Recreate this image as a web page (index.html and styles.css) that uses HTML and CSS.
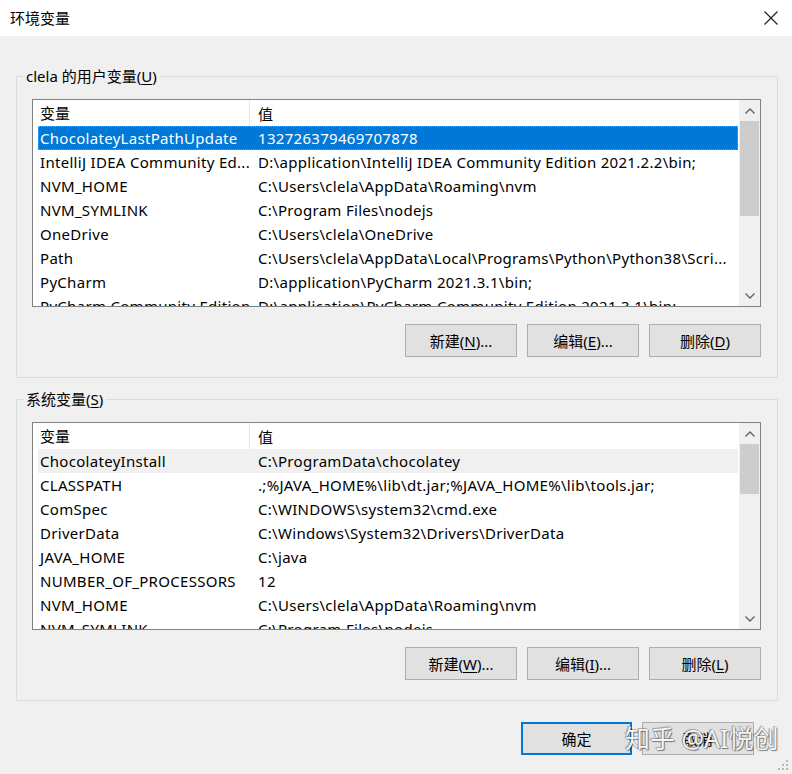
FILE: index.html
```html
<!DOCTYPE html>
<html>
<head>
<meta charset="utf-8">
<title>环境变量</title>
<link rel="stylesheet" href="styles.css">
</head>
<body>

<div class="titlebar">
  <span class="title">环境变量</span>
  <svg class="close" width="16" height="16" viewBox="0 0 16 16">
    <path d="M1.5 1.5 L14.5 14.5 M14.5 1.5 L1.5 14.5" stroke="#1a1a1a" stroke-width="1.1" fill="none"/>
  </svg>
</div>

<div class="content">

  <div class="group">
    <span class="group-title">clela 的用户变量(<u>U</u>)</span>
    <div class="list">
      <div class="list-main">
        <div class="list-head">
          <div class="hname">变量</div>
          <div class="hval">值</div>
        </div>
        <div class="row selected"><div class="name">ChocolateyLastPathUpdate</div><div class="val">132726379469707878</div></div>
        <div class="row"><div class="name">IntelliJ IDEA Community Ed...</div><div class="val">D:\application\IntelliJ IDEA Community Edition 2021.2.2\bin;</div></div>
        <div class="row"><div class="name">NVM_HOME</div><div class="val">C:\Users\clela\AppData\Roaming\nvm</div></div>
        <div class="row"><div class="name">NVM_SYMLINK</div><div class="val">C:\Program Files\nodejs</div></div>
        <div class="row"><div class="name">OneDrive</div><div class="val">C:\Users\clela\OneDrive</div></div>
        <div class="row"><div class="name">Path</div><div class="val">C:\Users\clela\AppData\Local\Programs\Python\Python38\Scri...</div></div>
        <div class="row"><div class="name">PyCharm</div><div class="val">D:\application\PyCharm 2021.3.1\bin;</div></div>
        <div class="row"><div class="name">PyCharm Community Edition</div><div class="val">D:\application\PyCharm Community Edition 2021.3.1\bin;</div></div>
      </div>
      <div class="scrollbar">
        <div class="arrow">
          <svg width="10" height="6" viewBox="0 0 10 6"><path d="M0.5 5.5 L5 1 L9.5 5.5" stroke="#606060" stroke-width="1.3" fill="none"/></svg>
        </div>
        <div class="track">
          <div class="thumb thumb-user"></div>
        </div>
        <div class="arrow">
          <svg width="10" height="6" viewBox="0 0 10 6"><path d="M0.5 0.5 L5 5 L9.5 0.5" stroke="#606060" stroke-width="1.3" fill="none"/></svg>
        </div>
      </div>
    </div>
    <div class="buttons">
      <button class="btn">新建(<u>N</u>)...</button>
      <button class="btn">编辑(<u>E</u>)...</button>
      <button class="btn">删除(<u>D</u>)</button>
    </div>
  </div>

  <div class="group group-sys">
    <span class="group-title">系统变量(<u>S</u>)</span>
    <div class="list">
      <div class="list-main">
        <div class="list-head">
          <div class="hname">变量</div>
          <div class="hval">值</div>
        </div>
        <div class="row hover"><div class="name">ChocolateyInstall</div><div class="val">C:\ProgramData\chocolatey</div></div>
        <div class="row"><div class="name">CLASSPATH</div><div class="val">.;%JAVA_HOME%\lib\dt.jar;%JAVA_HOME%\lib\tools.jar;</div></div>
        <div class="row"><div class="name">ComSpec</div><div class="val">C:\WINDOWS\system32\cmd.exe</div></div>
        <div class="row"><div class="name">DriverData</div><div class="val">C:\Windows\System32\Drivers\DriverData</div></div>
        <div class="row"><div class="name">JAVA_HOME</div><div class="val">C:\java</div></div>
        <div class="row"><div class="name">NUMBER_OF_PROCESSORS</div><div class="val">12</div></div>
        <div class="row"><div class="name">NVM_HOME</div><div class="val">C:\Users\clela\AppData\Roaming\nvm</div></div>
        <div class="row"><div class="name">NVM_SYMLINK</div><div class="val">C:\Program Files\nodejs</div></div>
      </div>
      <div class="scrollbar">
        <div class="arrow">
          <svg width="10" height="6" viewBox="0 0 10 6"><path d="M0.5 5.5 L5 1 L9.5 5.5" stroke="#606060" stroke-width="1.3" fill="none"/></svg>
        </div>
        <div class="track">
          <div class="thumb thumb-sys"></div>
        </div>
        <div class="arrow">
          <svg width="10" height="6" viewBox="0 0 10 6"><path d="M0.5 0.5 L5 5 L9.5 0.5" stroke="#606060" stroke-width="1.3" fill="none"/></svg>
        </div>
      </div>
    </div>
    <div class="buttons">
      <button class="btn">新建(<u>W</u>)...</button>
      <button class="btn">编辑(<u>I</u>)...</button>
      <button class="btn">删除(<u>L</u>)</button>
    </div>
  </div>

  <div class="footer">
    <button class="btn btn-default">确定</button>
    <button class="btn">取消</button>
  </div>

</div>

<div class="watermark">知乎 @AI悦创</div>

<svg class="grip" width="12" height="12" viewBox="0 0 12 12">
  <rect x="9" y="1" width="2" height="2" fill="#b8b8b8"/>
  <rect x="5" y="5" width="2" height="2" fill="#b8b8b8"/>
  <rect x="9" y="5" width="2" height="2" fill="#b8b8b8"/>
  <rect x="1" y="9" width="2" height="2" fill="#b8b8b8"/>
  <rect x="5" y="9" width="2" height="2" fill="#b8b8b8"/>
  <rect x="9" y="9" width="2" height="2" fill="#b8b8b8"/>
</svg>

</body>
</html>
```

FILE: styles.css
```css
* {
  box-sizing: border-box;
}
body {
  margin: 0;
  width: 792px;
  height: 774px;
  overflow: hidden;
  position: relative;
  background-color: #f0f0f0;
  color: #000;
  font-family: "Noto Sans", "Noto Sans CJK SC", sans-serif;
  font-size: 15px;
}
u {
  text-decoration: underline;
  text-underline-offset: 2px;
}

/* 標題列 */
.titlebar {
  height: 36px;
  background-color: #fff;
  display: flex;
  align-items: center;
  justify-content: space-between;
  padding: 0 13px 1px 10px;
}
.title {
  line-height: 20px;
}

.content {
  padding: 40px 14px 0 16px;
}

/* 分組框 */
.group {
  position: relative;
  height: 302px;
  border: 1px solid #dcdcdc;
  padding: 22px 16px 0 15px;
}
.group-sys {
  margin-top: 21px;
}
.group-title {
  position: absolute;
  top: -11px;
  left: 6px;
  padding: 0 3px;
  line-height: 20px;
  background-color: #f0f0f0;
}

/* 清單 */
.list {
  height: 208px;
  border: 1px solid #828282;
  background-color: #fff;
  display: flex;
}
.list-main {
  flex: 1;
  overflow: hidden;
}
.list-head {
  height: 26px;
  display: flex;
  align-items: center;
}
.hname {
  width: 217px;
  padding-left: 7px;
  border-right: 1px solid #e5e5e5;
  line-height: 26px;
}
.hval {
  padding-left: 8px;
}
.row {
  height: 24px;
  margin: 0 1px 0 5px;
  display: flex;
  align-items: center;
  white-space: nowrap;
  letter-spacing: 0.3px;
}
.row .name {
  width: 212px;
  padding-left: 2px;
  overflow: hidden;
}
.row .val {
  flex: 1;
  padding-left: 8px;
  overflow: hidden;
}
.row.selected {
  background-color: #0078d7;
  color: #fff;
  outline: 1px dotted #5fa8e8;
  outline-offset: -1px;
}
.row.hover {
  background-color: #f0f0f0;
}

/* 捲軸 */
.scrollbar {
  width: 21px;
  background-color: #f0f0f0;
  display: flex;
  flex-direction: column;
}
.arrow {
  height: 21px;
  display: flex;
  align-items: center;
  justify-content: center;
}
.track {
  flex: 1;
  padding: 0 1px;
}
.thumb {
  background-color: #cdcdcd;
}
.thumb-user {
  height: 95px;
}
.thumb-sys {
  height: 50px;
}

/* 按鈕 */
.buttons {
  margin-top: 17px;
  display: flex;
  justify-content: flex-end;
  gap: 10px;
}
.btn {
  width: 112px;
  height: 33px;
  background-color: #e1e1e1;
  border: 1px solid #adadad;
  font-family: inherit;
  font-size: 15px;
  color: #000;
  padding: 0;
}
.btn-default {
  width: 111px;
  border: 2px solid #0078d7;
}
.footer {
  margin-top: 21px;
  padding-right: 24px;
  display: flex;
  justify-content: flex-end;
  gap: 10px;
}

/* 浮水印 */
.watermark {
  position: absolute;
  left: 625px;
  top: 722px;
  font-size: 25px;
  line-height: 32px;
  color: #f6f6f6;
  text-shadow: 0 0 1px #555, 1px 1px 1px rgba(0, 0, 0, 0.45), -1px -1px 1px rgba(0, 0, 0, 0.25);
  white-space: nowrap;
}
.grip {
  position: absolute;
  right: 3px;
  bottom: 3px;
}
```
